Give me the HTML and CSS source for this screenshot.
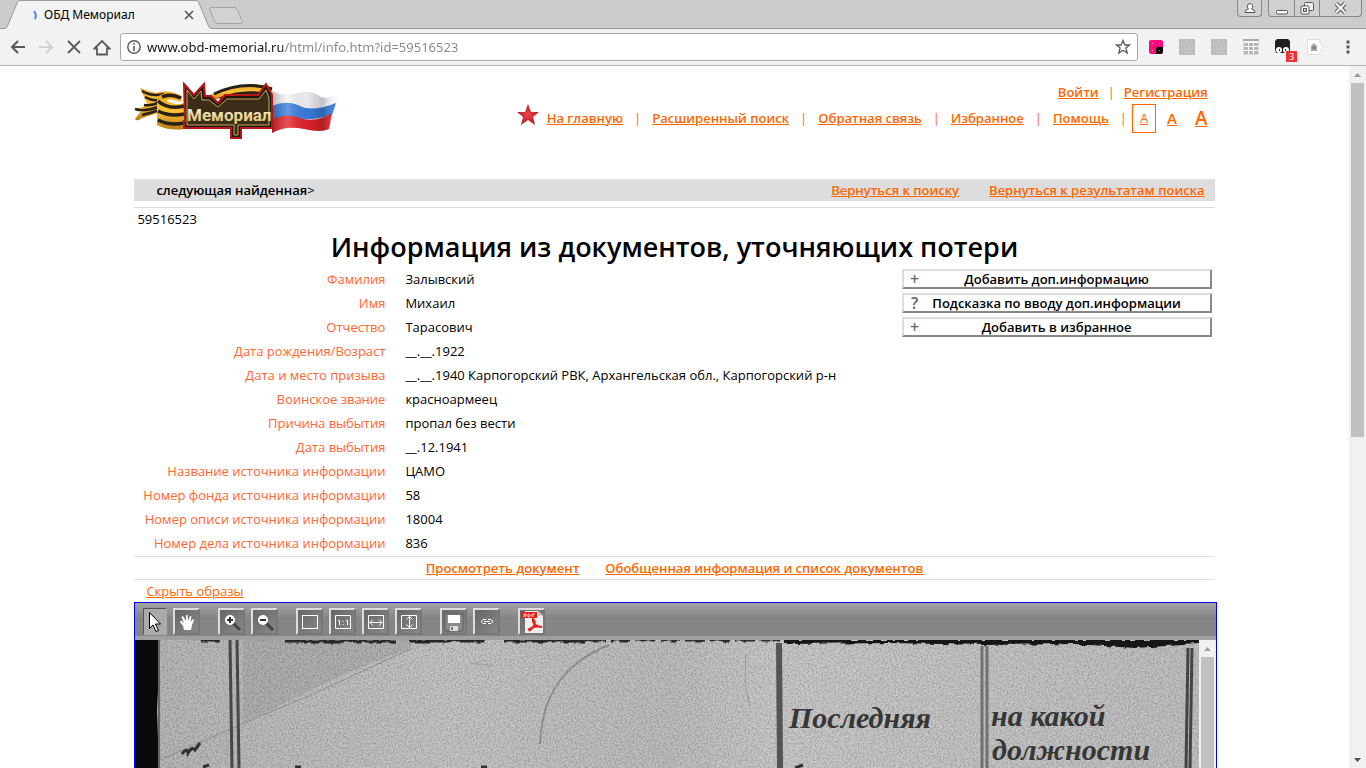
FILE: index.html
```html
<!DOCTYPE html>
<html lang="ru">
<head>
<meta charset="utf-8">
<title>ОБД Мемориал</title>
<link rel="stylesheet" href="styles.css">
</head>
<body>
<header class="browser">
  <div class="tabstrip">
    <svg class="tabshape" width="262" height="29" viewBox="0 0 262 29" aria-hidden="true">
      <path d="M0 29V28.500H5Q7 28 8 25L17 3Q18 .5 20 .5H196Q198 .5 199 3L208 25Q209 28.500 212 28.500V29Z" fill="#f2f2f2"/>
      <path d="M0 28.500H5Q7 28 8 25L17 3Q18 .5 20 .5H196Q198 .5 199 3L208 25Q209 28.500 212 28.500H262" fill="none" stroke="#999"/>
      <path d="M211 7.500H234Q236 7.500 237 9L242 21Q243 23.500 241 23.500H218Q216 23.500 215 22L210 10Q209 7.500 211 7.500Z" fill="#d2d2d2" stroke="#a4a4a4"/>
    </svg>
    <div class="tab">
      <svg width="6" height="10" viewBox="0 0 6 10"><path d="M1 1Q4 5 2 9" stroke="#4284f3" stroke-width="2" fill="none"/></svg>
      <span class="tabtitle">ОБД Мемориал</span>
      <button class="plain" aria-label="Закрыть вкладку"><svg width="10" height="10" viewBox="0 0 10 10"><path d="M1 1L9 9M9 1L1 9" stroke="#555" stroke-width="1.600"/></svg></button>
    </div>
    <div class="wincontrols">
      <button class="winbtn user" aria-label="Профиль"><svg width="12" height="13" viewBox="0 0 12 13"><path d="M1 10.500Q1 7.500 4.500 7Q3 5.500 3.500 3.500Q4 1.500 6 1.500Q8 1.500 8.500 3.500Q9 5.500 7.500 7Q11 7.500 11 10.500Z" fill="#fff" stroke="#555"/></svg></button>
      <button class="winbtn min" aria-label="Свернуть"><svg width="14" height="13" viewBox="0 0 14 13"><rect x="1.500" y="8.500" width="11" height="3.500" rx="1" fill="#fff" stroke="#555"/></svg></button>
      <button class="winbtn max" aria-label="Развернуть"><svg width="14" height="13" viewBox="0 0 14 13"><rect x="4.500" y=".5" width="9" height="8" rx="1" fill="#eee" stroke="#555"/><rect x="1" y="4" width="8" height="8" rx="1" fill="#fff" stroke="#555"/><rect x="3.500" y="6.500" width="3" height="3" fill="#ccc" stroke="#555"/></svg></button>
      <button class="winbtn close" aria-label="Закрыть"><svg width="13" height="12" viewBox="0 0 13 12"><path d="M2 1.500L11 10.500M11 1.500L2 10.500" stroke="#555" stroke-width="4"/><path d="M2 1.500L11 10.500M11 1.500L2 10.500" stroke="#fff" stroke-width="2"/></svg></button>
    </div>
  </div>
  <div class="toolbar">
    <button class="tool" aria-label="Назад"><svg width="16" height="16" viewBox="0 0 16 16"><path d="M15 8H2M8 2L2 8L8 14" fill="none" stroke="#5a5a5a" stroke-width="2"/></svg></button>
    <button class="tool" aria-label="Вперёд"><svg width="16" height="16" viewBox="0 0 16 16"><path d="M1 8H14M8 2L14 8L8 14" fill="none" stroke="#d2d2d2" stroke-width="2"/></svg></button>
    <button class="tool" aria-label="Остановить"><svg width="16" height="16" viewBox="0 0 16 16"><path d="M2 2L14 14M14 2L2 14" stroke="#5a5a5a" stroke-width="1.800"/></svg></button>
    <button class="tool" aria-label="Домой"><svg width="18" height="17" viewBox="0 0 18 17"><path d="M1.500 9.500L9 2L16.500 9.500H14V15.500H4V9.500Z" fill="none" stroke="#5a5a5a" stroke-width="1.800"/></svg></button>
    <div class="address">
      <svg width="14" height="14" viewBox="0 0 14 14"><circle cx="7" cy="7" r="6.200" fill="none" stroke="#5a5a5a" stroke-width="1.400"/><path d="M7 3V4.800M7 6V11" stroke="#5a5a5a" stroke-width="1.600"/></svg>
      <input class="url" type="text" aria-label="Адрес" value="www.obd-memorial.ru/html/info.htm?id=59516523">
      <button class="plain" aria-label="В закладки"><svg width="16" height="16" viewBox="0 0 16 16"><path d="M8 1.500L9.900 6H14.500L10.900 9L12.200 14L8 11.200L3.800 14L5.100 9L1.500 6H6.100Z" fill="none" stroke="#5a5a5a" stroke-width="1.300"/></svg></button>
    </div>
    <div class="extensions">
      <svg width="14" height="14" viewBox="0 0 14 14"><rect width="14" height="14" rx="2" fill="#ff0a7b"/><path d="M7 9Q7 7 9 7H14V12L12 14H7Z" fill="#000"/><path d="M3 3.500h1M3 10.500h1M10 3.500h1" stroke="#ffb0d4"/><path d="M10 10.500h1" stroke="#999"/></svg>
      <svg width="16" height="16" viewBox="0 0 16 16"><rect width="16" height="16" fill="#bcbcbc"/><circle cx="8" cy="8" r="5.500" fill="none" stroke="#ccc"/><circle cx="8" cy="8" r="2.500" fill="none" stroke="#ccc"/><path d="M10.500 6V9Q11 11 13 9" fill="none" stroke="#ccc"/></svg>
      <svg width="16" height="16" viewBox="0 0 16 16"><rect width="16" height="16" fill="#bcbcbc"/><circle cx="8" cy="8" r="5.500" fill="none" stroke="#ccc"/><circle cx="8" cy="8" r="2.500" fill="none" stroke="#ccc"/><path d="M10.500 6V9Q11 11 13 9" fill="none" stroke="#ccc"/></svg>
      <svg width="16" height="16" viewBox="0 0 16 16"><path d="M.5.5H15.500V15.500H.5Z" fill="#fff" stroke="#ddd"/><path d="M0 1H16" stroke="#aaa" stroke-width="2"/><path d="M1 5.500H15M1 9.500H15M1 13.500H15" stroke="#b5b5b5" stroke-width="3" stroke-dasharray="4 1"/></svg>
      <span class="ext-badged"><svg width="16" height="16" viewBox="0 0 16 16"><path d="M2 0H13L15 2V14H1L0 10V2Z" fill="#202020"/><circle cx="4" cy="11" r="3" fill="#fff"/><circle cx="11" cy="11" r="3" fill="#fff"/><path d="M4.500 10V12M10.500 10V12" stroke="#222"/></svg><span class="badge">3</span></span>
      <svg width="16" height="16" viewBox="0 0 16 16"><path d="M.5.5H12L15.500 8L12 15.500H.5Z" fill="#fff" stroke="#ddd"/><path d="M7 4L11 8H10V12H4V8H3Z" fill="#aaa"/><path d="M7 7.500V10" stroke="#777" stroke-width="3"/></svg>
      <button class="plain" aria-label="Меню"><svg width="4" height="14" viewBox="0 0 4 14"><path d="M.5.5h3v3h-3zM.5 5.500h3v3h-3zM.5 10.500h3v3h-3z" fill="#5a5a5a"/></svg></button>
    </div>
  </div>
</header>
<div class="viewport">
  <div class="content">
  <main class="page">
    <div class="masthead">
      <svg class="logo" width="206" height="58" viewBox="0 0 206 58" role="img" aria-label="Мемориал">
        <defs>
          <linearGradient id="gold" x1="0" x2="0" y1="0" y2="1"><stop offset="0" stop-color="#e5a526"/><stop offset=".5" stop-color="#ffc338"/><stop offset="1" stop-color="#b97813"/></linearGradient>
          <linearGradient id="letters" x1="0" x2="0" y1="0" y2="1"><stop offset="0" stop-color="#fffbe0"/><stop offset="1" stop-color="#d8bd6c"/></linearGradient>
          <linearGradient id="fold" x1="0" x2="1"><stop offset="0" stop-color="#000" stop-opacity=".25"/><stop offset=".25" stop-color="#fff" stop-opacity=".2"/><stop offset=".55" stop-color="#000" stop-opacity=".05"/><stop offset=".8" stop-color="#000" stop-opacity=".22"/><stop offset="1" stop-color="#fff" stop-opacity="0"/></linearGradient>
        </defs>
        <path d="M6 6Q13 9 22 11Q34 7 48 14L46 20Q34 14 27 22L24 31L8 36Q3 40 1 37L7 29L0 27Q9 26 13 22Z" fill="url(#gold)"/>
        <path d="M8 9Q18 15 30 12M11 15Q21 21 29 16M10 23Q17 24 24 21M8 33Q17 31 25 28M1 27Q10 30 24 25" fill="none" stroke="#292017" stroke-width="2.500"/>
        <path d="M23 19Q23 12 33 11Q42 10 48 15L47 19Q38 14 32 18Q40 24 50 21V47Q35 49 23 43Z" fill="url(#gold)"/>
        <path d="M28 15Q36 11 47 16M24 19Q34 28 50 24M24 29Q36 35 50 32M24 38Q36 44 50 41" fill="none" stroke="#292017" stroke-width="3.500"/>
        <path d="M74 14Q104-3 138 5V18Q112 10 78 18Z" fill="url(#gold)"/>
        <path d="M80 12Q109-2 138 7M86 17Q112 6 138 14" fill="none" stroke="#292017" stroke-width="3"/>
        <path d="M138 9Q149 15 163 11T187 15Q193 17 205 14L202 22L199 24Q196 20 187 22L186 28H138Z" fill="#f6f6fa"/>
        <path d="M138 24Q151 18 164 23Q177 31 202 21L198 33Q181 38 169 37Q150 33 138 39Z" fill="#3b7fe0"/>
        <path d="M138 37Q154 30 169 37Q184 40 198 31L195 47Q187 51 170 47Q152 43 138 51Z" fill="#e5252b"/>
        <path d="M138 9Q149 15 163 11T187 15Q193 17 202 13L195 47Q187 51 170 47Q152 43 138 51Z" fill="url(#fold)"/>
        <path d="M50 2L60 13L70 2L71 14H77L84 21L91 13H124L132 2L138 13V46H107V56H97V46H50V39H51Z" fill="#211910" stroke="#b8151b" stroke-width="2"/>
        <path d="M53 8L60 17L67 9L68 18H75L84 25L93 17H125L132 8L135 16V43H104V53H100V43H53Z" fill="#3b2d17" stroke="#c9a95a"/>
        <text class="logotext" x="53" y="39">Мемориал</text>
      </svg>
      <div class="navs">
        <nav class="account"><a href="#">Войти</a><span class="bar">|</span><a href="#">Регистрация</a></nav>
        <nav class="mainnav">
          <svg class="star" width="22" height="22" viewBox="0 0 22 22"><defs><radialGradient id="red"><stop offset="0" stop-color="#ed4146"/><stop offset="1" stop-color="#b51c24"/></radialGradient></defs><path d="M11 0L14 8H22L16 13L18 21L11 16L4 21L6 13L0 8H8Z" fill="url(#red)"/></svg>
          <a href="#">На главную</a><span class="bar">|</span><a href="#">Расширенный поиск</a><span class="bar">|</span><a href="#">Обратная связь</a><span class="bar">|</span><a href="#">Избранное</a><span class="bar">|</span><a href="#">Помощь</a><span class="bar">|</span>
          <span class="sizes"><a class="size small" href="#">A</a><a class="size medium" href="#">A</a><a class="size large" href="#">A</a></span>
        </nav>
      </div>
    </div>
    <nav class="results">
      <span class="next">следующая найденная<span class="gt">&gt;</span></span>
      <a href="#">Вернуться к поиску</a>
      <a href="#">Вернуться к результатам поиска</a>
    </nav>
    <section class="record">
      <div class="record-id">59516523</div>
      <h1>Информация из документов, уточняющих потери</h1>
      <div class="record-body">
        <table class="details">
          <tr><th scope="row">Фамилия</th><td>Залывский</td></tr>
          <tr><th scope="row">Имя</th><td>Михаил</td></tr>
          <tr><th scope="row">Отчество</th><td>Тарасович</td></tr>
          <tr><th scope="row">Дата рождения/Возраст</th><td>__.__.1922</td></tr>
          <tr><th scope="row">Дата и место призыва</th><td>__.__.1940 Карпогорский РВК, Архангельская обл., Карпогорский р-н</td></tr>
          <tr><th scope="row">Воинское звание</th><td>красноармеец</td></tr>
          <tr><th scope="row">Причина выбытия</th><td>пропал без вести</td></tr>
          <tr><th scope="row">Дата выбытия</th><td>__.12.1941</td></tr>
          <tr><th scope="row">Название источника информации</th><td>ЦАМО</td></tr>
          <tr><th scope="row">Номер фонда источника информации</th><td>58</td></tr>
          <tr><th scope="row">Номер описи источника информации</th><td>18004</td></tr>
          <tr><th scope="row">Номер дела источника информации</th><td>836</td></tr>
        </table>
        <div class="actions">
          <button class="action"><span class="sign">+</span><span class="caption">Добавить доп.информацию</span></button>
          <button class="action"><span class="sign">?</span><span class="caption">Подсказка по вводу доп.информации</span></button>
          <button class="action"><span class="sign">+</span><span class="caption">Добавить в избранное</span></button>
        </div>
      </div>
    </section>
    <nav class="doclinks"><a href="#">Просмотреть документ</a><a href="#">Обобщенная информация и список документов</a></nav>
    <div class="hide"><a href="#">Скрыть образы</a></div>
    <section class="viewer">
      <div class="viewer-tools">
        <div class="group">
          <button class="vbtn pressed" aria-label="Выбор"><svg width="20" height="22" viewBox="0 0 20 22"><path d="M4.500 1.500V17.500L8 14L11 20.500L13.500 19.500L10.500 13H15.500Z" fill="#fff" stroke="#000"/></svg></button>
          <button class="vbtn" aria-label="Переместить"><svg width="20" height="20" viewBox="0 0 20 20"><path d="M7 18L6 14L3 10L4 8.500L7 11L4.500 5L6 4L9 9V3H10.500L11 9L13 4L14.500 4.500L13.500 10L16 7L17 8L15 13L14 18Z" fill="#fff"/></svg></button>
        </div>
        <div class="group">
          <button class="vbtn" aria-label="Увеличить"><svg width="20" height="20" viewBox="0 0 20 20"><path d="M11 11L18 18" stroke="#444" stroke-width="3"/><circle cx="8" cy="8" r="5" fill="#fff"/><path d="M5 8H11M8 5V11" stroke="#333" stroke-width="2"/></svg></button>
          <button class="vbtn" aria-label="Уменьшить"><svg width="20" height="20" viewBox="0 0 20 20"><path d="M11 11L18 18" stroke="#444" stroke-width="3"/><circle cx="8" cy="8" r="5" fill="#fff"/><path d="M5 8H11" stroke="#333" stroke-width="2"/></svg></button>
        </div>
        <div class="group">
          <button class="vbtn" aria-label="Вписать"><svg width="20" height="20" viewBox="0 0 20 20"><rect x="2.500" y="3.500" width="15" height="13" fill="none" stroke="#fff"/></svg></button>
          <button class="vbtn" aria-label="Исходный размер"><svg width="20" height="20" viewBox="0 0 20 20"><path d="M2.500 3.500H17.500V16.500H2.500ZM5 8.500H6.500V13M13 8.500H14.500V13M10 9V10M10 12V13" fill="none" stroke="#fff"/></svg></button>
          <button class="vbtn" aria-label="По ширине"><svg width="20" height="20" viewBox="0 0 20 20"><path d="M2.500 3.500H17.500V16.500H2.500ZM4 10.500H16M7 7.500L4 10.500L7 13.500M13 7.500L16 10.500L13 13.500" fill="none" stroke="#fff"/></svg></button>
          <button class="vbtn" aria-label="По высоте"><svg width="20" height="20" viewBox="0 0 20 20"><path d="M2.500 3.500H17.500V16.500H2.500ZM10.500 4.500V15.500M7.500 7.500L10.500 4.500L13.500 7.500M7.500 12.500L10.500 15.500L13.500 12.500" fill="none" stroke="#fff"/></svg></button>
        </div>
        <div class="group">
          <button class="vbtn" aria-label="Сохранить"><svg width="20" height="20" viewBox="0 0 20 20"><path d="M1 2H19V19H3L1 17Z" fill="#8a8a8a" stroke="#606060"/><path d="M4 3H16V11H4Z" fill="#fff"/><path d="M6 14H14V19H6Z" fill="#ddd"/><path d="M8 15V18" stroke="#777" stroke-width="2"/></svg></button>
          <button class="vbtn" aria-label="Ссылка"><svg width="20" height="20" viewBox="0 0 20 20"><path d="M9 7.500H6L4.500 9V10L6 11.500H9M11 7.500H14L15.500 9V10L14 11.500H11M7 9.500H13" fill="none" stroke="#fff"/></svg></button>
        </div>
        <div class="group">
          <button class="vbtn" aria-label="PDF"><svg width="24" height="24" viewBox="0 0 24 24"><path d="M5 1H18L23 6V23H5Z" fill="#eee"/><path d="M18 1V6H23" fill="#ccc"/><path d="M1 2H17V8H1Z" fill="#dc2018"/><path d="M4 4V7M4 4H6V6H4M8 4H9L10 5V6L9 7H8ZM12 7V4H15M12 6H14" fill="none" stroke="#ffc9c2"/><path d="M9 21Q18 14 13 9Q12 16 22 17Q14 15 8 20" fill="none" stroke="#e4231c" stroke-width="2"/></svg></button>
        </div>
      </div>
      <div class="viewer-body">
        <svg class="scan" viewBox="0 0 1064 128" preserveAspectRatio="xMinYMin slice" role="img" aria-label="Страница документа">
          <defs>
            <filter id="grain" x="0" y="0" width="1" height="1"><feTurbulence type="fractalNoise" baseFrequency=".6" numOctaves="2" seed="4"/><feColorMatrix values="0 0 0 0 0  0 0 0 0 0  0 0 0 0 0  .45 0 0 0 -.16"/></filter>
            <filter id="rough" x="-5%" y="-50%" width="110%" height="200%"><feTurbulence type="fractalNoise" baseFrequency=".13" numOctaves="2" seed="7"/><feDisplacementMap in="SourceGraphic" scale="5"/></filter>
            <linearGradient id="paper"><stop offset="0" stop-color="#b8b8b8"/><stop offset=".3" stop-color="#c6c6c6"/><stop offset=".5" stop-color="#bfbfbf"/><stop offset=".6" stop-color="#cacaca"/><stop offset="1" stop-color="#c2c2c2"/></linearGradient>
          </defs>
          <rect width="1064" height="128" fill="url(#paper)"/>
          <path d="M108 0H278L275 8L205 36L108 83Z" fill="#a9a9a9" opacity=".65"/>
          <path d="M25 120L105 85L180 53L278 8" fill="none" stroke="#999"/>
          <path d="M405 104Q407 65 424 42Q441 18 474 5" fill="none" stroke="#888" stroke-width="2" opacity=".7"/>
          <path d="M611 14L610 42L615 68M335 23L360 26M35 112L54 96" fill="none" stroke="#aaa"/>
          <rect width="1064" height="128" filter="url(#grain)"/>
          <path d="M0 0H23L24 30L22 70L24 128H0Z" fill="#090909"/>
          <path d="M24 0V128" stroke="#666" stroke-width="2"/>
          <g filter="url(#rough)">
            <path d="M65 0H85M150 1H260M275 1H350M368 1H450" stroke="#262626" stroke-width="3"/>
            <path d="M450 0H650" stroke="#2a2a2a" stroke-width="3" stroke-dasharray="20 5"/>
            <path d="M650 0H1064V4L1000 8L940 4L850 5L760 3L650 4Z" fill="#191919"/>
          </g>
          <path d="M95 0L97 128M102 0L104 128" stroke="#484848" stroke-width="3"/>
          <path d="M644 3L645 128" stroke="#545454" stroke-width="6"/>
          <path d="M847 6V128M852 6V128" stroke="#717171" stroke-width="3"/>
          <path d="M1053 8L1051 128M1057 8L1055 128" stroke="#444" stroke-width="3"/>
          <path d="M47 114Q52 107 53 113Q57 106 60 110Q62 107 65 103M68 127L74 125M160 127H166M346 127H352M660 128L668 125" fill="none" stroke="#303030" stroke-width="3"/>
          <g class="handwriting"><text x="654" y="88">Последняя</text><text x="856" y="86">на какой</text><text x="857" y="120">должности</text></g>
        </svg>
        <div class="inner-scroll"><svg width="17" height="17" viewBox="0 0 17 17"><path d="M5 11L8.500 7L12 11Z" fill="#a0a0a0"/></svg><div class="thumb"></div></div>
      </div>
    </section>
  </main>
  </div>
  <div class="page-scroll">
    <svg width="17" height="17" viewBox="0 0 17 17"><path d="M5 11L8.500 7L12 11Z" fill="#999"/></svg>
    <div class="track"><div class="thumb"></div></div>
    <svg width="17" height="17" viewBox="0 0 17 17"><path d="M5 7L8.500 11L12 7Z" fill="#505050"/></svg>
  </div>
</div>
</body>
</html>
```
FILE: styles.css
```css
* { box-sizing: border-box; }
html, body { height: 100%; margin: 0; }
body {
  display: flex;
  flex-direction: column;
  overflow: hidden;
  background: #fff;
  color: #000;
  font: 13px/16px "Open Sans", "Noto Sans", sans-serif;
}
svg { display: block; flex: none; }
a { color: #f60; }
button { font: inherit; color: inherit; margin: 0; }
.plain, .tool { display: block; border: 0; padding: 0; background: none; }

/* Browser frame */
.browser { flex: none; background: #f2f2f2; border-bottom: 1px solid #b3b3b3; }
.tabstrip { position: relative; display: flex; justify-content: space-between; height: 29px; background: #ccc; border-bottom: 1px solid #999; }
.tabshape { position: absolute; left: 0; top: 0; }
.tab { position: relative; display: flex; align-items: center; width: 194px; height: 29px; padding-left: 33px; gap: 5px; font: 12px/16px "Noto Sans", sans-serif; }
.tabtitle { flex: 1; }
.wincontrols { display: flex; height: 17px; padding-right: 4px; }
.winbtn { display: flex; align-items: center; justify-content: center; width: 25px; padding: 0; border: 1px solid #888; border-top: 0; border-left-width: 0; background: #d0d0d0; }
.user { margin-right: 6px; border-left-width: 1px; border-radius: 0 0 4px 4px; }
.min { width: 27px; border-left-width: 1px; border-radius: 0 0 0 4px; }
.close { width: 42px; border-radius: 0 0 4px 0; }
.toolbar { display: flex; align-items: center; height: 36px; padding: 0 16px 0 10px; }
.tool { width: 16px; margin-right: 12px; }
.tool:nth-child(3) { margin-right: 11px; }
.tool:nth-child(4) { width: 18px; margin-right: 9px; }
.address { display: flex; flex: 1; align-items: center; gap: 6px; height: 28px; padding: 0 6px; border: 1px solid #a8a8a8; border-radius: 3px; background: #fff; }
.url {
  flex: 1;
  min-width: 0;
  padding: 0;
  border: 0;
  outline: 0;
  font: 13px/20px "Noto Sans", sans-serif;
  color: #111;
  background: linear-gradient(90deg, #111 136px, #888 136px);
  -webkit-background-clip: text;
  background-clip: text;
  -webkit-text-fill-color: transparent;
}
.extensions { display: flex; align-items: center; gap: 16px; padding-left: 11px; }
.extensions .plain { margin-left: 7px; }
.ext-badged { position: relative; }
.badge { position: absolute; left: 11px; top: 12px; width: 11px; height: 11px; background: #e33; color: #fff; font: 9px/11px "Noto Sans", sans-serif; text-align: center; }

/* Page */
.viewport { display: flex; flex: 1; min-height: 0; }
.content { display: flex; flex: 1; min-width: 0; }
.page { display: flex; flex-direction: column; width: calc(80% + 1px); margin: 0 auto; }
.page > * { flex: none; }
.page-scroll { display: flex; flex-direction: column; width: 17px; background: #f1f1f1; }
.track { flex: 1; }
.page-scroll .thumb { width: 13px; height: 53%; margin: 0 2px; background: #c1c1c1; }

.masthead { display: flex; justify-content: space-between; height: 113px; padding: 16px 7px 0 0; }
.navs { display: flex; flex-direction: column; font-weight: 600; }
.account { display: flex; justify-content: flex-end; gap: 9px; padding-top: 2px; height: 21px; }
.mainnav { display: flex; align-items: center; gap: 11px; height: 30px; }
.bar { font-weight: 400; color: #f60; }
.star { margin: -6px -3px 0 0; }
.sizes { display: flex; align-items: center; margin-left: -6px; }
.size { font-weight: 400; }
.small { padding: 5px 7px; border: 1px solid #f60; font-size: 13px; line-height: 17px; }
.medium { padding-left: 11px; font-size: 15px; font-weight: 600; }
.large { padding-left: 18px; font-size: 19px; font-weight: 600; }

.results { display: flex; align-items: center; gap: 30px; height: 22px; padding: 0 10px 0 22px; background: #ddd; font-weight: 600; }
.next { flex: 1; }
.gt { font-weight: 400; }
.record { margin-top: 6px; border-top: 1px solid #ddd; }
.record-id { padding: 3px; }
h1 { margin: 0; font-size: 27px; line-height: 34px; font-weight: 600; text-align: center; }
.record-body { display: flex; justify-content: space-between; align-items: flex-start; padding: 3px 3px 1px 0; }
.details { border-collapse: collapse; }
.details th, .details td { height: 24px; padding: 0; white-space: nowrap; }
.details th { width: 271px; padding-right: 20px; color: #f63; font-weight: 400; text-align: right; }
.actions { display: flex; flex-direction: column; gap: 4px; width: 310px; padding-top: 2px; }
.action { display: flex; height: 20px; padding: 0 4px; border: 2px solid; border-color: #ddd #888 #888 #ddd; background: #fff; font-weight: 600; line-height: 16px; }
.sign { width: 14px; color: #666; font-size: 16px; }
.caption { flex: 1; padding-right: 14px; }
.doclinks { display: flex; justify-content: center; gap: 26px; height: 24px; padding-top: 3px; border: 1px solid #ddd; border-width: 1px 0; font-weight: 600; }
.hide { padding: 3px 12px; font-size: 13px; }

/* Document viewer */
.page > .viewer { display: flex; flex: 1; flex-direction: column; min-height: 0; margin-right: -2px; border: 1px solid #00f; border-bottom: 0; }
.viewer-tools { display: flex; gap: 18px; height: 37px; padding: 5px 8px 0; border-bottom: 4px solid #a0a0a0; background: linear-gradient(#a4a4a4, #858585 15px); }
.group { display: flex; gap: 6px; }
.vbtn { display: flex; align-items: center; justify-content: center; width: 27px; height: 27px; padding: 0; border: 2px solid; border-color: #ddd #777 #777 #ddd; background: linear-gradient(135deg, #666, #888); overflow: hidden; }
.pressed { width: 24px; border: 1px solid; border-color: #555 #aaa #aaa #555; background: #aaa; }
.viewer-body { display: flex; flex: 1; min-height: 0; }
.scan { flex: 1; min-width: 0; height: 100%; }
.inner-scroll { width: 17px; background: #f1f1f1; }
.inner-scroll .thumb { height: 100%; margin: 0 2px; background: #c1c1c1; }
.handwriting { fill: #363636; font: italic 700 30px "Liberation Serif", serif; }
.logotext { fill: url(#letters); font: 700 17px Roboto, sans-serif; }
```
